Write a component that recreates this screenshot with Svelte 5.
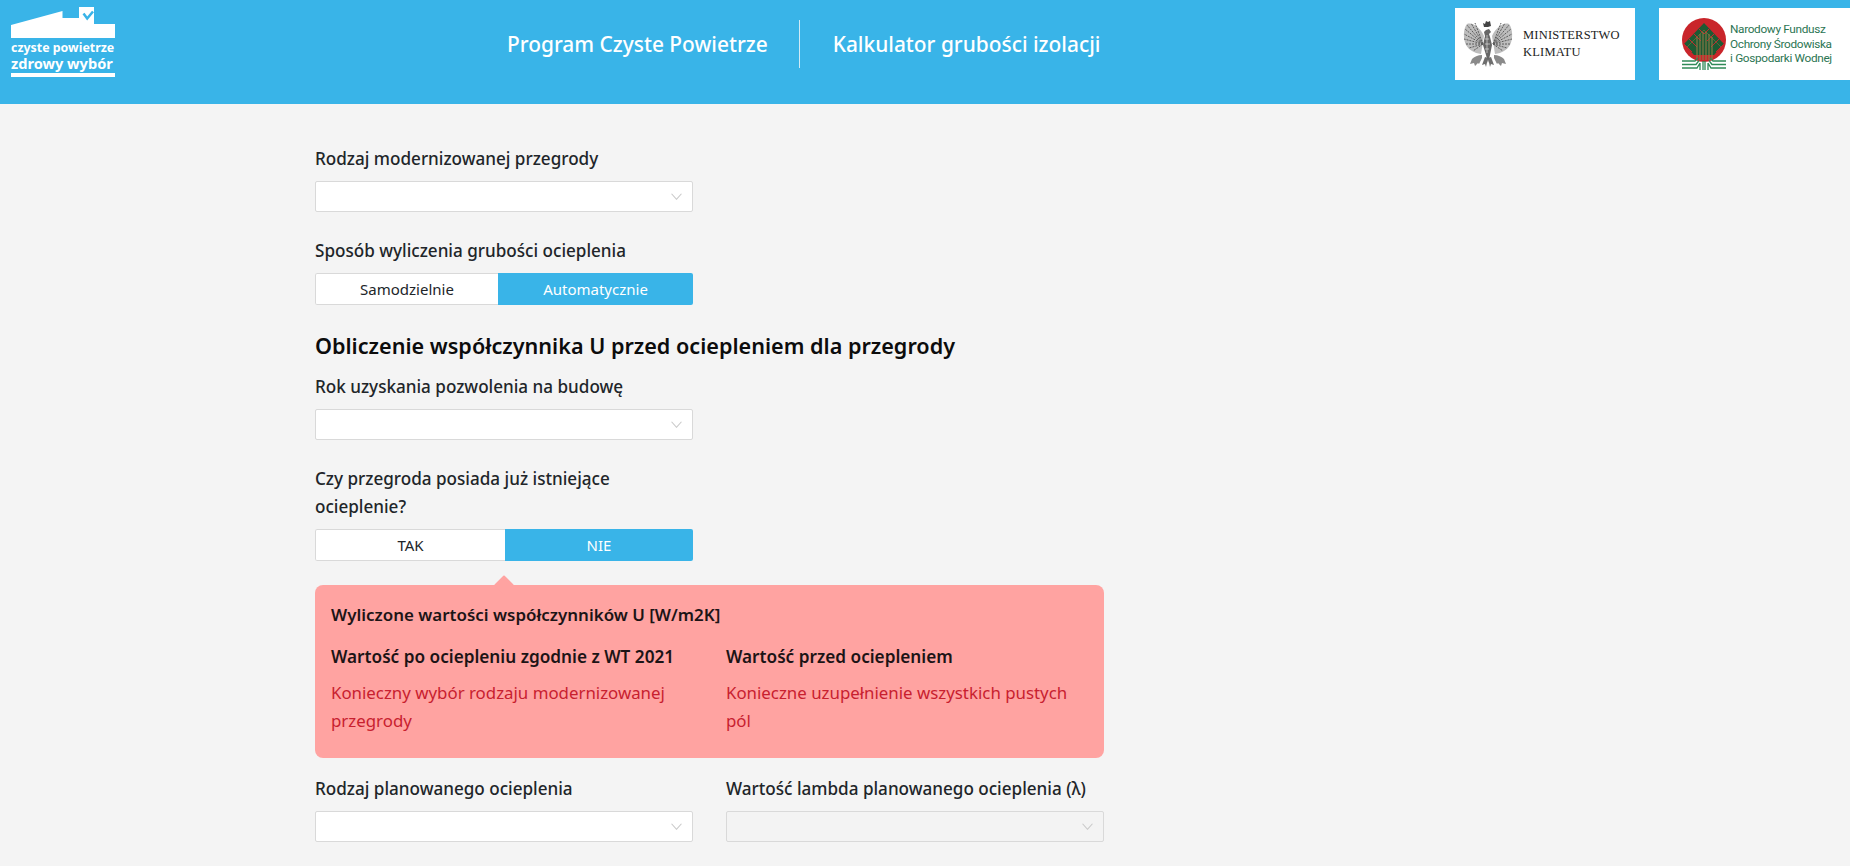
<script>
  let sposob = $state('auto');
  let ocieplenie = $state('nie');

  // feather tips of the eagle's left wing, the right one is mirrored
  const feathers = [
    [12, 4], [8, 4], [4, 6], [2, 10], [1, 15], [1, 20], [3, 25], [6, 29], [10, 32]
  ];
</script>

<header class="top">
  <a class="logo" href="#top" aria-label="Czyste powietrze">
    <svg class="house" viewBox="0 0 104 31" width="104" height="31">
      <path d="M0 31V18L51.500 4V11H68V0H83V17H104V31Z" fill="#fff" />
      <path d="M72.500 6.500l3.700 5 5.800-7" fill="none" stroke="#39b4e8" stroke-width="2.500" />
    </svg>
    <span class="logo-text">czyste powietrze</span>
    <span class="logo-text big">zdrowy wybór</span>
    <span class="logo-bar"></span>
  </a>

  <nav class="titles">
    <span>Program Czyste Powietrze</span>
    <i class="sep"></i>
    <span>Kalkulator grubości izolacji</span>
  </nav>

  <div class="partners">
    <div class="partner mk">
      <svg viewBox="0 0 50 50" width="50" height="50">
        {#each [false, true] as flip}
          <g transform={flip ? 'translate(50 0) scale(-1 1)' : ''}>
            <path d="M21 17C17 8 9 3 4 5 0 10 0 20 3 26c3 5 8 8 15 9z" fill="#bdbdbd" />
            {#each feathers as [x, y]}
              <path d="M20 25L{x} {y}" stroke="#5c5c5c" stroke-width="1" stroke-dasharray="2 1" fill="none" />
            {/each}
            <path d="M19 36c-4 0-8 2-10 4l-2 5 4-1 1 3 3-3 1 1 3-6" fill="#8a8a8a" />
            <path d="M22 38l-3 8 3-1 1 3 2-9" fill="#6e6e6e" />
          </g>
        {/each}
        <path d="M21 13l2-2 3-1 2 3-2 2 1 3 2 8-2 10-2 8-2-8-3-10 2-9z" fill="#666" />
        <path d="M21 8l-1-4 2 1 1-3 2 1 2-1 1 5-3 1z" fill="#444" />
        <path d="M24 16v18M22 20l4 0M22 25h5M22 30h4" stroke="#ddd" stroke-width=".7" />
      </svg>
      <p>MINISTERSTWO<br />KLIMATU</p>
    </div>
    <div class="partner nf">
      <svg viewBox="0 0 46 54" width="46" height="54">
        <circle cx="23" cy="23" r="22" fill="#c9252b" />
        <path d="M23 6L43 27 33 38H13L3 27Z" fill="#1d5a33" />
        <path d="M3 27l8 8M8 22l8 8M13 17l7 7M18 12l5 5M43 27l-8 8M38 22l-8 8M33 17l-7 7M28 12l-5 5" stroke="#c9252b" stroke-width="1" />
        <path d="M6 30L23 13 40 30" fill="none" stroke="#6f6b3a" stroke-width=".8" />
        <path d="M16 20v22M19 17v26M22 15v28M25 15v28M28 17v26M31 20v22" stroke="#8a7a45" stroke-width="1.100" />
        <g fill="none" stroke="#2f8a57" stroke-width="1.300">
          <path d="M1 44h13l3-3M1 47.500h14l3-4M1 51h15l3-5M45 44H32l-3-3M45 47.500H31l-3-4M45 51H30l-3-5M19 46v7M22 44v9M24 44v9M27 46v7" />
        </g>
      </svg>
      <p>Narodowy Fundusz<br />Ochrony Środowiska<br />i Gospodarki Wodnej</p>
    </div>
  </div>
</header>

<main class="form">
  <section class="col">
    <label class="label" for="rodzaj">Rodzaj modernizowanej przegrody</label>
    <div class="select" id="rodzaj"><svg viewBox="0 0 10 6"><path d="M.5.500 5 5.500 9.500.5" /></svg></div>
  </section>

  <section class="col">
    <span class="label">Sposób wyliczenia grubości ocieplenia</span>
    <div class="toggle split-a">
      <button class:on={sposob === 'sam'} onclick={() => (sposob = 'sam')}>Samodzielnie</button>
      <button class:on={sposob === 'auto'} onclick={() => (sposob = 'auto')}>Automatycznie</button>
    </div>
  </section>

  <h2>Obliczenie współczynnika U przed ociepleniem dla przegrody</h2>

  <section class="col">
    <label class="label" for="rok">Rok uzyskania pozwolenia na budowę</label>
    <div class="select" id="rok"><svg viewBox="0 0 10 6"><path d="M.5.500 5 5.500 9.500.5" /></svg></div>
  </section>

  <section class="col tight">
    <span class="label">Czy przegroda posiada już istniejące ocieplenie?</span>
    <div class="toggle split-b">
      <button class:on={ocieplenie === 'tak'} onclick={() => (ocieplenie = 'tak')}>TAK</button>
      <button class:on={ocieplenie === 'nie'} onclick={() => (ocieplenie = 'nie')}>NIE</button>
    </div>
  </section>

  <section class="result">
    <h3>Wyliczone wartości współczynników U [W/m2K]</h3>
    <div class="pair">
      <div>
        <h4>Wartość po ociepleniu zgodnie z WT 2021</h4>
        <p>Konieczny wybór rodzaju modernizowanej przegrody</p>
      </div>
      <div>
        <h4>Wartość przed ociepleniem</h4>
        <p>Konieczne uzupełnienie wszystkich pustych pól</p>
      </div>
    </div>
  </section>

  <section class="pair wide">
    <div>
      <label class="label" for="plan">Rodzaj planowanego ocieplenia</label>
      <div class="select" id="plan"><svg viewBox="0 0 10 6"><path d="M.5.500 5 5.500 9.500.5" /></svg></div>
    </div>
    <div>
      <label class="label" for="lambda">Wartość lambda planowanego ocieplenia (λ)</label>
      <div class="select off" id="lambda"><svg viewBox="0 0 10 6"><path d="M.5.500 5 5.500 9.500.5" /></svg></div>
    </div>
  </section>
</main>

<style>
  :global(body) {
    background: #f4f4f4;
    font-family: "Noto Sans", "Open Sans", sans-serif;
    color: #212529;
    overflow: hidden;
    height: 866px;
  }

  .top {
    height: 104px;
    background: #39b4e8;
    display: flex;
    align-items: flex-start;
    color: #fff;
  }

  .logo {
    display: flex;
    flex-direction: column;
    width: 104px;
    margin: 7px 0 0 11px;
    color: #fff;
    text-decoration: none;
  }
  .house { display: block; }
  .logo-text {
    font-size: 12.400px;
    line-height: 15px;
    font-weight: 700;
    white-space: nowrap;
    margin-top: 2px;
  }
  .logo-text.big { font-size: 14.600px; line-height: 17px; margin-top: 0; }
  .logo-bar { height: 4px; background: #fff; margin-top: 1px; }

  .titles {
    display: flex;
    align-items: center;
    margin: 20px 0 0 392px;
    height: 48px;
    font-size: 20.900px;
    font-weight: 500;
  }
  .sep {
    width: 1px;
    height: 48px;
    background: #cfeaf6;
    margin: 0 33px 0 31px;
  }

  .partners {
    display: flex;
    gap: 24px;
    margin-left: auto;
    padding-top: 8px;
  }
  .partner {
    height: 72px;
    background: #fff;
    display: flex;
    align-items: center;
  }
  .partner.mk { width: 180px; padding-left: 8px; box-sizing: border-box; }
  .partner.nf { width: 191px; padding-left: 22px; box-sizing: border-box; }
  .partner p { margin: 0; }
  .mk p {
    font: 12.500px/17px "Liberation Serif", serif;
    color: #222;
    margin-left: 10px;
    letter-spacing: .2px;
  }
  .nf p {
    font: 400 11.800px/14.500px Roboto, sans-serif;
    color: #2b7553;
    margin-left: 3px;
    white-space: nowrap;
    letter-spacing: -.33px;
  }

  .form {
    width: 789px;
    margin-left: 315px;
    padding-top: 41px;
  }

  .col { width: 378px; margin-bottom: 25px; }
  .col.tight { margin-bottom: 24px; }

  .label {
    display: block;
    font-size: 17.100px;
    font-weight: 500;
    line-height: 28px;
    margin-bottom: 8px;
  }

  .select {
    position: relative;
    height: 31px;
    box-sizing: border-box;
    background: #fff;
    border: 1px solid #d9d9d9;
    border-radius: 2px;
  }
  .select.off { background: #f3f3f3; }
  .select svg {
    position: absolute;
    right: 10px;
    top: 11px;
    width: 11px;
    height: 7px;
    fill: none;
    stroke: #c9c9c9;
    stroke-width: 1;
  }

  .toggle {
    display: grid;
    height: 32px;
    border-radius: 2px;
    overflow: hidden;
  }
  .split-a { grid-template-columns: 183px 195px; }
  .split-b { grid-template-columns: 190px 188px; }
  .toggle button {
    border: 1px solid #d9d9d9;
    border-right: 0;
    background: #fff;
    padding: 0;
    font: 400 15px "Noto Sans", sans-serif;
    color: #212529;
    border-radius: 2px 0 0 2px;
  }
  .toggle button.on {
    background: #39b4e8;
    border: 0;
    color: #fff;
    border-radius: 0;
  }

  h2 {
    margin: 0 0 11px;
    font-size: 21.600px;
    line-height: 32px;
    font-weight: 600;
    color: #0c0c0c;
    white-space: nowrap;
  }

  .result {
    position: relative;
    background: #ffa3a1;
    border-radius: 8px;
    padding: 16px 16px 23px;
    margin: 0 0 17px;
    color: #1c1416;
  }
  .result::before {
    content: "";
    position: absolute;
    left: 182px;
    top: -7px;
    width: 14px;
    height: 14px;
    background: #ffa3a1;
    transform: rotate(45deg);
    border-radius: 1px;
  }
  .result h3 {
    margin: 0 0 14px;
    font-size: 16.950px;
    line-height: 28px;
    font-weight: 600;
    white-space: nowrap;
  }
  .result h4 {
    margin: 0 0 8px;
    font-size: 17.200px;
    line-height: 28px;
    font-weight: 600;
    white-space: nowrap;
  }
  .result p {
    margin: 0;
    font-size: 16.850px;
    line-height: 28px;
    color: #c8202f;
  }

  .pair {
    display: grid;
    grid-template-columns: 1fr 1fr;
    column-gap: 33px;
  }
  .result .pair { column-gap: 33px; grid-template-columns: 362px 362px; }
</style>
